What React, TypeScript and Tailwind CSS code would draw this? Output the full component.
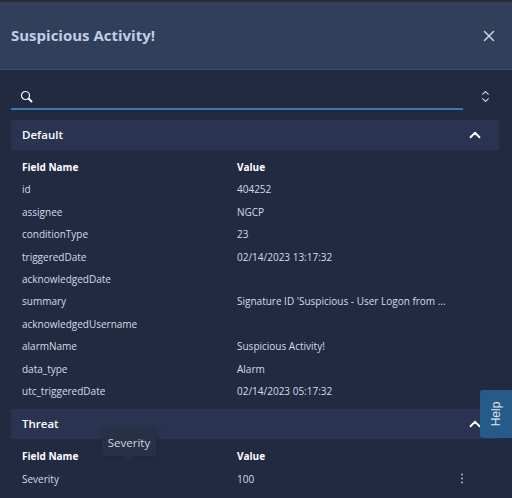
import { ChevronUp, X } from "lucide-react";

const rows: [string, string][] = [
  ["id", "404252"],
  ["assignee", "NGCP"],
  ["conditionType", "23"],
  ["triggeredDate", "02/14/2023 13:17:32"],
  ["acknowledgedDate", ""],
  ["summary", "Signature ID 'Suspicious - User Logon from ..."],
  ["acknowledgedUsername", ""],
  ["alarmName", "Suspicious Activity!"],
  ["data_type", "Alarm"],
  ["utc_triggeredDate", "02/14/2023 05:17:32"],
];

function Row({ name, value, bold }: { name: string; value: string; bold?: boolean }) {
  return (
    <div className={`flex h-[22.4px] items-center pl-[22px] text-[10px] ${bold ? "font-bold text-white" : "text-[#d5dbe6]"}`}>
      <div className="w-[215px] shrink-0 whitespace-nowrap">{name}</div>
      <div className="whitespace-nowrap">{value}</div>
    </div>
  );
}

function Section({ title }: { title: string }) {
  return (
    <div className="mx-[11px] flex h-[30px] w-[488px] items-center justify-between bg-[#2a3450] pl-[11px] pr-[15px] text-[11.5px] font-semibold text-white">
      <span>{title}</span>
      <ChevronUp size={18} strokeWidth={2.4} color="#ffffff" />
    </div>
  );
}

export default function App() {
  return (
    <div
      className="relative h-[498px] w-[512px] overflow-hidden bg-[#222a42]"
      style={{ fontFamily: '"Open Sans", "Noto Sans", sans-serif' }}
    >
      <div className="h-[2px] bg-[#2b2c31]" />
      <header className="flex h-[68px] items-center justify-between border-b border-[#3d4a68] bg-[#323f5b] pl-[11px] pr-[14px]">
        <h1 className="text-[15px] font-bold text-[#bfcee6]">Suspicious Activity!</h1>
        <X size={18} strokeWidth={2} color="#ccd5e6" />
      </header>
      <div className="flex h-[40px] items-start pl-[11px]">
        <div className="flex h-[40px] w-[452px] items-center border-b-2 border-[#3f78ad] pl-[9px] pt-[14px]">
          <svg width="13" height="13" viewBox="0 0 13 13" fill="none" stroke="#ffffff">
            <circle cx="5.5" cy="5.5" r="4" strokeWidth="1.2" />
            <path d="M8.5 8.5 L12 12" strokeWidth="2" />
          </svg>
        </div>
        <svg className="ml-[18px] mt-[20px]" width="9" height="13" viewBox="0 0 10 14" fill="none" stroke="#c5cfdf" strokeWidth="1.2">
          <path d="M1.5 5 L5 1.5 L8.5 5" />
          <path d="M1.5 9 L5 12.5 L8.5 9" />
        </svg>
      </div>
      <div className="h-[10px]" />
      <Section title="Default" />
      <div className="pt-[6.3px]">
        <Row name="Field Name" value="Value" bold />
        {rows.map(([n, v]) => (
          <Row key={n} name={n} value={v} />
        ))}
      </div>
      <div className="h-[6px]" />
      <Section title="Threat" />
      <div className="pt-[7px]">
        <Row name="Field Name" value="Value" bold />
        <div className="relative">
          <Row name="Severity" value="100" />
          <svg className="absolute left-[460px] top-[5px]" width="4" height="11" viewBox="0 0 4 11" fill="#b8c2d4">
            <circle cx="2" cy="1.5" r="0.9" />
            <circle cx="2" cy="5.5" r="0.9" />
            <circle cx="2" cy="9.5" r="0.9" />
          </svg>
        </div>
      </div>

      <div className="absolute left-[102px] top-[429px] flex h-[27px] w-[54px] items-center justify-center rounded-[4px] bg-[#293046] text-[11.5px] text-[#ced6e3] shadow-[0_0_4px_rgba(30,36,58,0.6)]">
        Severity
        <div className="absolute bottom-[-4px] left-[22px] h-0 w-0 border-x-[5px] border-t-[4px] border-x-transparent border-t-[#293046]" />
      </div>

      <div className="absolute left-[480px] top-[390px] flex h-[48px] w-[32px] items-center justify-center rounded-l-[3px] bg-[#265a87]">
        <span className="-rotate-90 text-[12px] text-[#d8e4f0]" style={{ fontFamily: '"Liberation Sans", sans-serif' }}>Help</span>
      </div>
    </div>
  );
}
